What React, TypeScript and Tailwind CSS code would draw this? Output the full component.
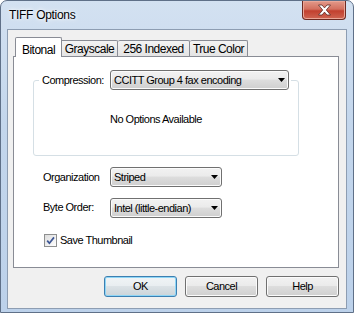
const btnBg =
  'bg-[linear-gradient(to_bottom,#f2f2f2_0%,#ebebeb_45%,#dddddd_50%,#cfcfcf_100%)]'

function Arrow() {
  return (
    <svg width="7" height="4" viewBox="0 0 7 4" className="shrink-0">
      <path d="M0 0h7L3.5 4z" fill="#000" />
    </svg>
  )
}

function Combo({ className, text }: { className: string; text: string }) {
  return (
    <div
      className={`${className} h-[20px] flex items-center justify-between pl-[3px] pr-[3px] border border-[#707070] rounded-[3px] shadow-[inset_0_0_0_1px_#fbfbfb] ${btnBg}`}
    >
      <span className="leading-none whitespace-nowrap">{text}</span>
      <Arrow />
    </div>
  )
}

function Button({ label, primary }: { label: string; primary?: boolean }) {
  return (
    <div
      className={
        primary
          ? `w-[73px] h-[21px] flex items-center justify-center rounded-[3px] border border-[#3c7fb1] shadow-[inset_0_0_0_1px_#8fd6f6] bg-[linear-gradient(to_bottom,#f0f4f6_0%,#e9eef1_45%,#dbe2e6_50%,#ccd4d9_100%)]`
          : `w-[73px] h-[21px] flex items-center justify-center rounded-[3px] border border-[#707070] shadow-[inset_0_0_0_1px_#fbfbfb] ${btnBg}`
      }
    >
      {label}
    </div>
  )
}

export default function App() {
  return (
    <div className="w-[354px] h-[313px] overflow-hidden font-['Liberation_Sans',Arial,sans-serif] text-[11px] tracking-[-0.5px] text-black">
      <div className="w-[354px] h-[313px] rounded-t-[7px] border border-[#5f7088] bg-[linear-gradient(to_bottom,#d3e1f1_0%,#c3d6ec_40%,#bcd1ea_100%)] flex flex-col">
        {/* Title bar */}
        <div className="h-[28px] flex items-start justify-between">
          <span className="pl-[8px] pt-[8px] text-[12px] tracking-[-0.3px] leading-none [text-shadow:0_0_6px_#ffffff,0_0_3px_#ffffff]">
            TIFF Options
          </span>
          <div className="mr-[7px] w-[44px] h-[19px] rounded-b-[4px] border border-t-0 border-[#6d2a22] bg-[linear-gradient(to_bottom,#e39a8a_0%,#d3705f_45%,#c2402f_55%,#cf6552_100%)] shadow-[inset_0_0_0_1px_#eaa798] flex items-center justify-center">
            <svg width="15" height="12" viewBox="0 0 15 12">
              <path
                d="M1.5 1h3.5L7.5 3.9 10 1h3.5L9.3 6l4.2 5H10L7.5 8.1 5 11H1.5l4.2-5z"
                fill="#fff"
                stroke="#5a2a24"
                strokeWidth="0.8"
                strokeLinejoin="round"
              />
            </svg>
          </div>
        </div>

        {/* Client area */}
        <div className="ml-[6px] w-[340px] h-[280px] border border-[#8d9db2] bg-[#f0f0f0] flex flex-col">
          {/* Tabs */}
          <div className="mt-[7px] ml-[7px] h-[20px] -mb-px relative z-10 flex items-end">
            <div className="w-[47px] h-[20px] border border-b-0 border-[#898c95] bg-white rounded-t-[2px] flex items-start justify-center pt-[3px] text-[12px]">
              Bitonal
            </div>
            <div className="w-[56px] h-[16px] mb-px border border-l-0 border-b-0 border-[#898c95] rounded-tr-[2px] bg-[linear-gradient(to_bottom,#f3f3f3,#e4e4e4)] flex items-center justify-center text-[12px]">
              Grayscale
            </div>
            <div className="w-[72px] h-[16px] mb-px border border-l-0 border-b-0 border-[#898c95] rounded-t-[2px] bg-[linear-gradient(to_bottom,#f3f3f3,#e4e4e4)] flex items-center justify-center text-[12px]">
              256 Indexed
            </div>
            <div className="w-[58px] h-[16px] mb-px border border-l-0 border-b-0 border-[#898c95] rounded-t-[2px] bg-[linear-gradient(to_bottom,#f3f3f3,#e4e4e4)] flex items-center justify-center text-[12px]">
              True Color
            </div>
          </div>

          {/* Tab panel */}
          <div className="ml-[5px] w-[326px] h-[212px] border border-[#898c95] bg-white flex flex-col">
            <fieldset className="ml-[19px] mt-[13px] w-[266px] h-[86px] border border-[#d5dfe5] rounded-[3px]">
              <legend className="ml-[5px] px-[3px] pr-[2px]">
                <div className="flex items-center">
                  <span className="w-[68px] whitespace-nowrap">Compression:</span>
                  <Combo className="w-[179px]" text="CCITT Group 4 fax encoding" />
                </div>
              </legend>
              <div className="mt-[23px] ml-[76px] leading-[13px]">No Options Available</div>
            </fieldset>

            <div className="mt-[11px] ml-[29px] flex items-center">
              <span className="w-[67px]">Organization</span>
              <Combo className="w-[112px]" text="Striped" />
            </div>
            <div className="mt-[11px] ml-[29px] flex items-center">
              <span className="w-[67px] -mt-[2px]">Byte Order:</span>
              <Combo className="w-[112px]" text="Intel (little-endian)" />
            </div>
            <div className="mt-[14px] ml-[30px] flex items-center gap-[3px]">
              <div className="w-[13px] h-[13px] border border-[#8e8f8f] bg-[linear-gradient(135deg,#dcdcdc,#ffffff)] flex items-center justify-center">
                <svg width="11" height="11" viewBox="0 0 11 11">
                  <path
                    d="M2.2 5.6l2.2 2.6L9 2.4"
                    fill="none"
                    stroke="#3d5694"
                    strokeWidth="1.7"
                  />
                </svg>
              </div>
              <span>Save Thumbnail</span>
            </div>
          </div>

          {/* Buttons */}
          <div className="mt-[8px] mr-[7px] flex justify-end gap-[8px]">
            <Button label="OK" primary />
            <Button label="Cancel" />
            <Button label="Help" />
          </div>
        </div>
      </div>
    </div>
  )
}
